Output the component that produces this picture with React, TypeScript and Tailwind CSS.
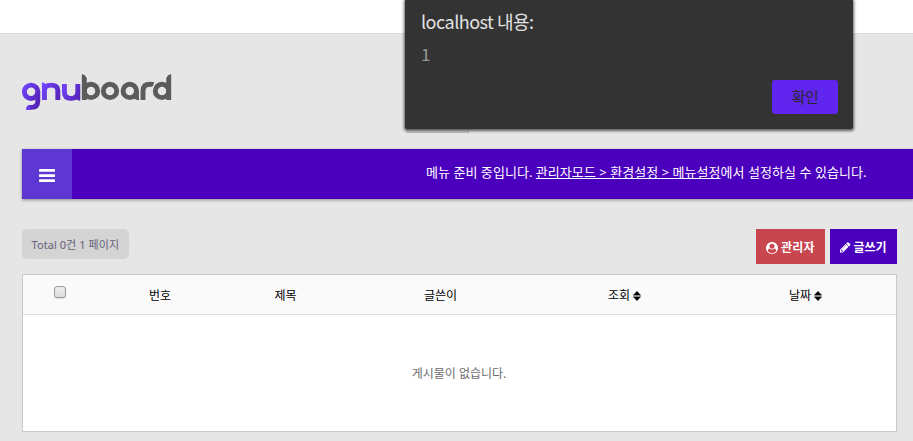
import React from "react";

function Logo() {
  return (
    <svg width="150" height="40" viewBox="0 0 150 40" fill="none" strokeWidth="4.900" aria-label="gnuboard">
      <defs>
        <linearGradient id="g1" gradientUnits="userSpaceOnUse" x1="0" y1="14" x2="19" y2="24">
          <stop stopColor="#7046ff" /><stop offset="1" stopColor="#5724b9" />
        </linearGradient>
        <linearGradient id="g2" gradientUnits="userSpaceOnUse" x1="20" y1="14" x2="38" y2="24">
          <stop stopColor="#7046ff" /><stop offset="1" stopColor="#5724b9" />
        </linearGradient>
        <linearGradient id="g3" gradientUnits="userSpaceOnUse" x1="40" y1="14" x2="58" y2="24">
          <stop stopColor="#7046ff" /><stop offset="1" stopColor="#5724b9" />
        </linearGradient>
      </defs>
      <g stroke="url(#g1)">
        <circle cx="9.100" cy="19.800" r="6.700" />
        <path d="M15.800 19.800V29q0 6.400-6.600 6.400H6.500" />
      </g>
      <path fill="#6a3eee" d="M4 38q0-5 4-5v5z" />
      <path stroke="url(#g2)" d="M22.400 28V13M22.400 18.500q0-5.400 6.700-5.400t6.700 5.600V28" />
      <path fill="#7046ff" d="M20 10.500q3.500 0 4.800 3.500H20z" />
      <path stroke="url(#g3)" d="M42.400 12v8q0 6.400 6.700 6.400t6.700-6.400V12v14" />
      <path fill="#5724b9" d="M53.400 25h4.800v3.800q-3.500 0-4.800-3.800z" />
      <g stroke="#5b5b5b">
        <circle cx="69" cy="18.900" r="6.700" /><path d="M62.300 28V6" />
        <circle cx="88" cy="18.900" r="6.700" />
        <circle cx="107.800" cy="18.900" r="6.700" /><path d="M114.500 18.900V27" />
        <path d="M121 28v-9q0-6.700 6.800-6.700h1.500" />
        <circle cx="140" cy="18.900" r="6.700" /><path d="M146.700 6V28" />
      </g>
      <g fill="#5b5b5b">
        <path d="M59.900 2q4.400 1 4.800 5h-4.800z" />
        <path d="M149.100 2q-4.400 1-4.800 5h4.800z" />
        <path d="M128.500 9.900h3.500q-.2 4.900-3.500 4.900z" />
        <path d="M112.100 25h4.900v3.300q-4 0-4.900-3.300z" />
      </g>
    </svg>
  );
}

function UserIcon() {
  return (
    <svg width="12" height="12" viewBox="0 0 1792 1792" fill="currentColor" className="mt-[2px]">
      <path d="M1523 1339q-22-155-87.500-257.500t-184.500-118.500q-67 74-159.500 115.500t-195.500 41.500-195.500-41.500-159.500-115.500q-119 16-184.500 118.500t-87.500 257.500q106 150 271 237.500t356 87.500 356-87.500 271-237.500zm-243-699q0-159-112.500-271.500t-271.500-112.500-271.500 112.500-112.500 271.500 112.500 271.500 271.500 112.500 271.500-112.500 112.500-271.500zm512 256q0 182-71 347.500t-190.500 286-285.500 191.500-349 71q-182 0-348-71t-286-191-191-286-71-348 71-348 191-286 286-191 348-71 348 71 286 191 191 286 71 348z" />
    </svg>
  );
}

function PencilIcon() {
  return (
    <svg width="10.500" height="10.500" viewBox="0 0 1536 1536" fill="currentColor" className="mt-[2px]">
      <path d="M363 1408l91-91-235-235-91 91v107h128v128h107zm523-928q0-22-22-22-10 0-17 7l-542 542q-7 7-7 17 0 22 22 22 10 0 17-7l542-542q7-7 7-17zm-54-192l416 416-832 832h-416v-416zm683 96q0 53-37 90l-166 166-416-416 166-165q36-38 90-38 53 0 91 38l235 234q37 39 37 91z" />
    </svg>
  );
}

function SortIcon() {
  return (
    <svg width="8" height="10" viewBox="0 0 8 10" className="relative left-px ml-[2px]">
      <path d="M.3 4.200L4 .3l3.700 3.900zM.3 5.800h7.400L4 9.700z" fill="#000" stroke="#000" strokeWidth=".4" strokeLinejoin="round" />
    </svg>
  );
}

export default function App() {
  return (
    <div className="relative h-[441px] w-full overflow-hidden bg-[#e6e6e6] font-['Noto_Sans','Noto_Sans_CJK_KR',sans-serif] text-xs text-black">
      <div className="h-[34px] border-b border-[#dcdcdc] bg-white" />
      <header className="h-[115px] pt-[38px] pl-[22px]">
        <Logo />
      </header>
      <nav className="ml-[22px] flex h-[50px] bg-[#4b00bd] text-white shadow-[0_1px_3px_rgba(0,0,0,0.4)]">
        <button className="flex w-[50px] shrink-0 items-center justify-center bg-[#5e36d1] pt-[3px] pr-px">
          <svg width="16" height="13" viewBox="0 0 16 13" fill="#fff">
            <rect width="16" height="2.700" rx=".4" />
            <rect y="5.200" width="16" height="2.700" rx=".4" />
            <rect y="10.300" width="16" height="2.700" rx=".4" />
          </svg>
        </button>
        <p className="pl-[354px] text-[13px] leading-[46px] tracking-[0.045px] whitespace-nowrap">
          메뉴 준비 중입니다. <a className="underline">관리자모드 &gt; 환경설정 &gt; 메뉴설정</a>에서 설정하실 수 있습니다.
        </p>
      </nav>
      <main className="mt-[30px] mr-4 ml-[22px]">
        <div className="flex h-[45px] items-start justify-between">
          <div className="h-[30px] w-[107px] rounded-[5px] bg-[#d4d4d4] pl-[9.500px] text-[11px] leading-[32px] tracking-[0.07px] whitespace-nowrap text-[#656179]">
            Total 0건 1 페이지
          </div>
          <div className="flex gap-[5px] font-bold whitespace-nowrap text-white">
            <button className="flex h-[35px] w-[69px] items-center gap-[3px] bg-[#c8464f] pl-[10px]">
              <UserIcon /><span className="pt-[2px] tracking-[0.2px]">관리자</span>
            </button>
            <button className="flex h-[35px] w-[67px] items-center gap-[3px] bg-[#4b00bd] pl-[10px]">
              <PencilIcon /><span className="pt-[2px]">글쓰기</span>
            </button>
          </div>
        </div>
        <section className="h-[158px] border border-[#c9c9c9] bg-white">
          <div className="grid h-10 grid-cols-[74px_126px_125px_185px_182px_180px] border-b border-[#dcdcdc] bg-[#fafafa] leading-[41px]">
            <div className="flex justify-center pt-[11px]">
              <span className="h-3 w-3 rounded-[3px] border border-[#9a9a9a] bg-linear-to-b from-[#ededed] to-[#dcdcdc] shadow-[0_1px_1px_rgba(0,0,0,0.12)]" />
            </div>
            <div className="text-center">번호</div>
            <div className="text-center">제목</div>
            <div className="text-center">글쓴이</div>
            <div className="flex items-center justify-center">조회<SortIcon /></div>
            <div className="flex items-center justify-center">날짜<SortIcon /></div>
          </div>
          <p className="pr-px text-center leading-[118px] text-[#6c6c6c]">게시물이 없습니다.</p>
        </section>
      </main>
      <div className="absolute top-[120px] left-[407px] h-[13px] w-[62px] border border-[#c5c5c5] bg-[#d9d9d9]" />
      <div className="absolute top-0 left-[405px] h-[129px] w-[448px] rounded-b-[2px] bg-[#333] px-4 pt-[9px] font-['Noto_Sans_CJK_KR',sans-serif] shadow-[0_1px_3px_1px_rgba(0,0,0,0.6)]">
        <h1 className="text-[18px] leading-6 tracking-[-0.5px] whitespace-nowrap text-[#e2e2e2]">localhost 내용:</h1>
        <p className="mt-[9px] text-[17px] leading-6 text-[#999]">1</p>
        <button className="mt-[14px] ml-[351px] block h-[34px] w-[66px] rounded-[3px] bg-[#6025ef] text-[15px] leading-[32px] tracking-[-0.5px] text-[#292929]">확인</button>
      </div>
    </div>
  );
}
